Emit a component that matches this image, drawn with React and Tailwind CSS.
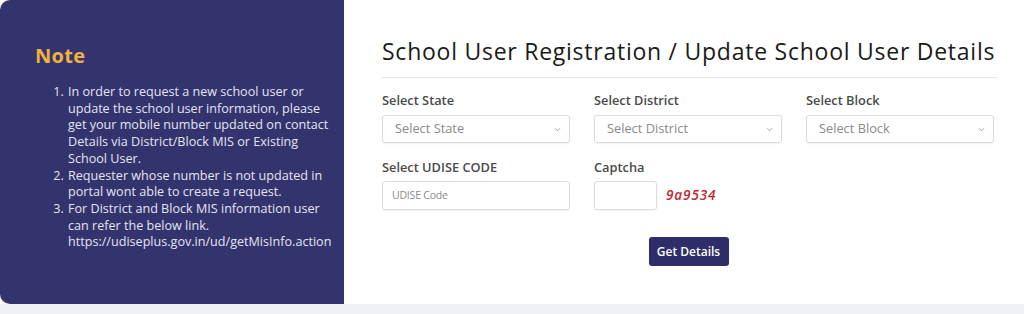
import React from "react";

const font = { fontFamily: '"Open Sans", "Noto Sans", sans-serif' };

function Chevron() {
  return (
    <svg width="7" height="5" viewBox="0 0 8 6" className="text-[#9a9a9a]">
      <path d="M1 1.5 L4 4.5 L7 1.5" fill="none" stroke="currentColor" strokeWidth="1.1" />
    </svg>
  );
}

function Select({ label, placeholder }) {
  return (
    <div className="flex flex-col w-[188px]">
      <div className="text-[12.8px] font-semibold text-[#4a4a4a] leading-[16px] mb-[7px]">{label}</div>
      <div className="h-[28px] border border-[#dcdcdc] rounded-[3px] flex items-center justify-between pl-[12px] pr-[8px] shadow-[0_1px_2px_rgba(0,0,0,0.06)]">
        <span className="text-[12.8px] text-[#8a8a8a]">{placeholder}</span>
        <Chevron />
      </div>
    </div>
  );
}

export default function App() {
  return (
    <div style={font} className="w-[1024px] h-[314px] bg-[#eef0f6] flex flex-col overflow-hidden">
      <div className="flex h-[304px] bg-white">
        <div className="w-[344px] bg-[#33336d] rounded-l-[10px] pl-[35px] pr-[6px] pt-[42px]">
          <div className="text-[20px] font-bold text-[#f0b23c] leading-[28px] tracking-[0.3px]">Note</div>
          <ol className="list-decimal pl-[32px] mt-[14px] text-[12.6px] leading-[16.7px] text-[#e4e4f2]">
            <li className="pl-[1px]">In order to request a new school user or update the school user information, please get your mobile number updated on contact Details via District/Block MIS or Existing School User.</li>
            <li className="pl-[1px]">Requester whose number is not updated in portal wont able to create a request.</li>
            <li className="pl-[1px]">For District and Block MIS information user can refer the below link. https://udiseplus.gov.in/ud/getMisInfo.action</li>
          </ol>
        </div>
        <div className="flex-1 pl-[38px] pr-[27px] pt-[36px]">
          <div className="text-[23px] font-medium text-[#1a1a1a] leading-[30px] tracking-[0.75px] whitespace-nowrap">School User Registration / Update School User Details</div>
          <div className="h-px bg-[#e8e8e8] mt-[11px] mb-[14px]" />
          <div className="flex gap-[24px]">
            <Select label="Select State" placeholder="Select State" />
            <Select label="Select District" placeholder="Select District" />
            <Select label="Select Block" placeholder="Select Block" />
          </div>
          <div className="flex gap-[24px] mt-[16px]">
            <div className="flex flex-col w-[188px]">
              <div className="text-[12.8px] font-semibold text-[#4a4a4a] leading-[16px] mb-[6px]">Select UDISE CODE</div>
              <div className="h-[29px] border border-[#dcdcdc] rounded-[3px] flex items-center pl-[9px] shadow-[0_1px_2px_rgba(0,0,0,0.06)]">
                <span className="text-[10.5px] text-[#8a8a8a] tracking-[-0.2px]">UDISE Code</span>
              </div>
            </div>
            <div className="flex flex-col">
              <div className="text-[12.8px] font-semibold text-[#4a4a4a] leading-[16px] mb-[6px]">Captcha</div>
              <div className="flex items-center gap-[9px]">
                <div className="w-[63px] h-[29px] border border-[#dcdcdc] rounded-[3px] shadow-[0_1px_2px_rgba(0,0,0,0.06)]" />
                <span className="text-[13.5px] italic font-semibold text-[#c4262e] tracking-[0.9px]">9a9534</span>
              </div>
            </div>
          </div>
          <div className="flex justify-center mt-[27px] pr-[2px]">
            <div className="w-[80px] h-[29px] bg-[#2e2d69] rounded-[3px] flex items-center justify-center text-white text-[12px] font-semibold">Get Details</div>
          </div>
        </div>
      </div>
    </div>
  );
}
